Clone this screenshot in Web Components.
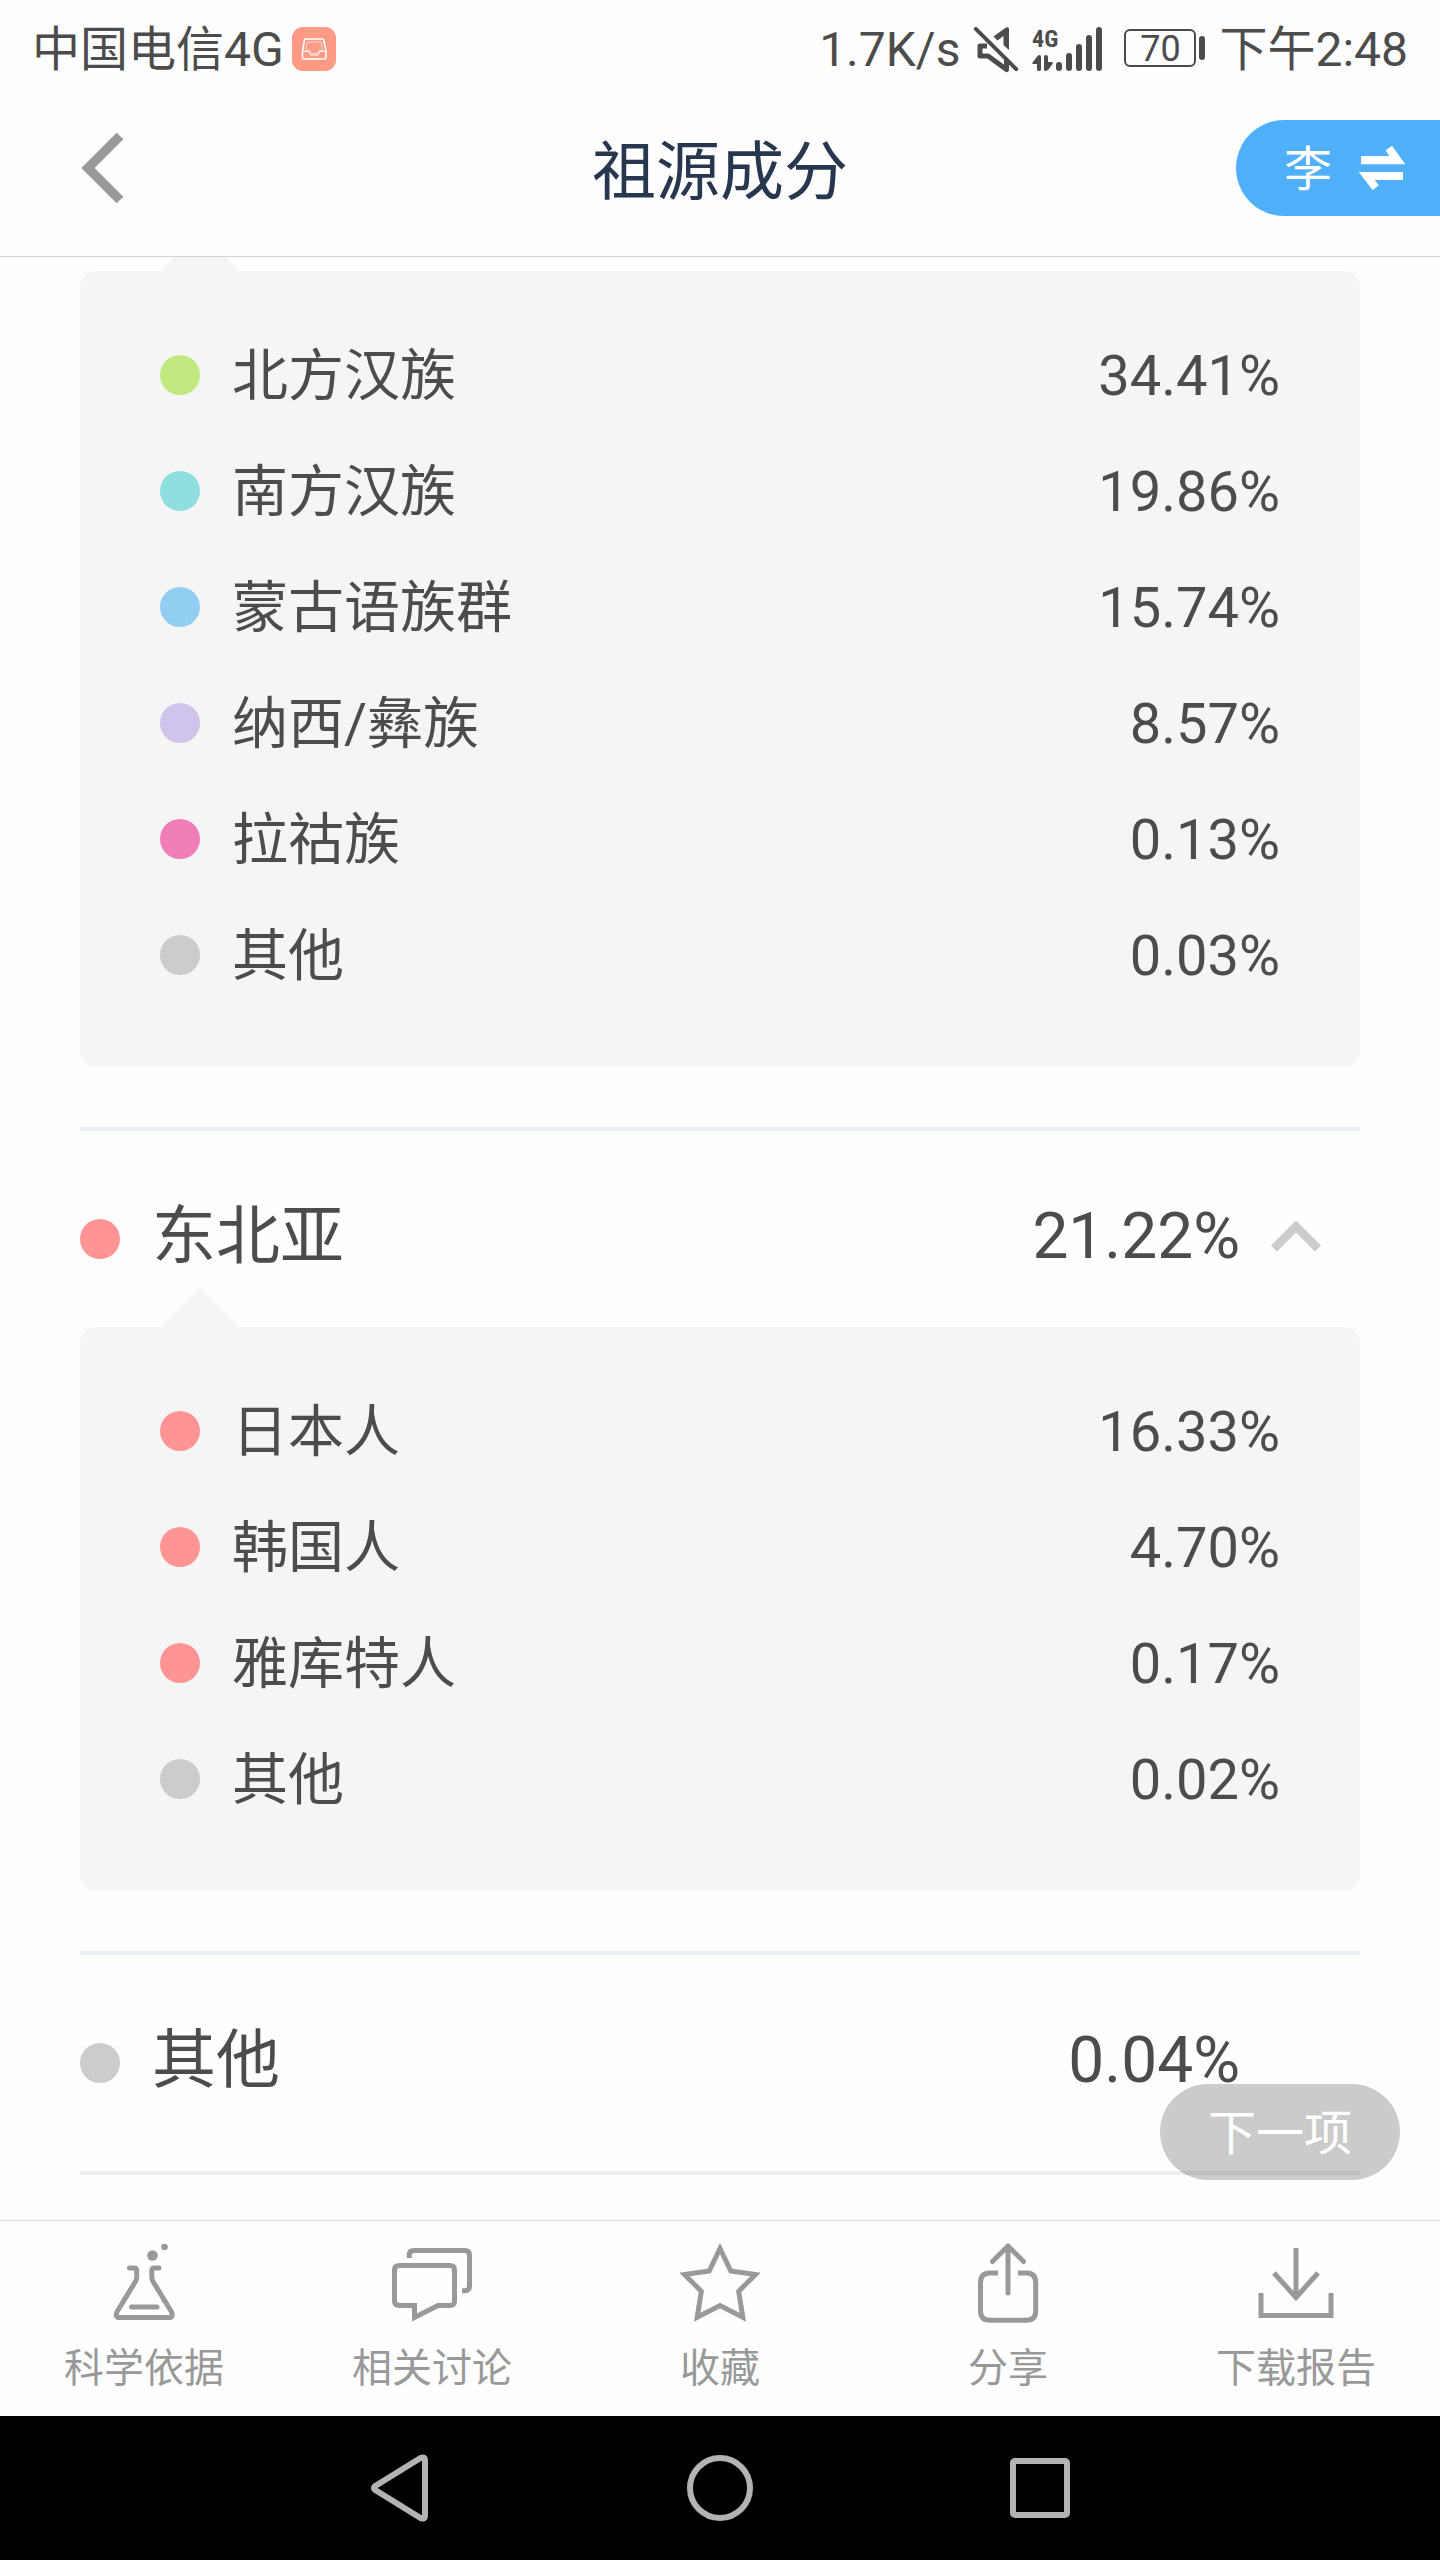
<!DOCTYPE html>
<html lang="zh-CN">
<head>
<meta charset="utf-8">
<meta name="viewport" content="width=device-width, initial-scale=1">
<title>祖源成分</title>
<style>
  :root {
    --page: #fefefe;
    --ink: #4c4c4c;
    --title: #27374f;
    --muted: #999;
    --panel: #f5f5f5;
    --rule: #ebeef1;
    --accent: #4fb0f9;
  }
  body {
    margin: 0;
    background: var(--page);
    color: var(--ink);
    font-family: Roboto, "Noto Sans CJK SC", sans-serif;
  }
</style>
</head>
<body>
<ancestry-app></ancestry-app>

<template id="ancestry-app">
  <style>
    :host { display: flex; flex-direction: column; min-height: 100vh; }
    main { flex: 1; position: relative; overflow: hidden; padding: 14px 80px 0; }
    .next {
      position: absolute; right: 40px; bottom: 40px;
      height: 96px; padding: 4px 48px 0; border: 0; border-radius: 48px;
      background: rgba(0, 0, 0, .2); color: #fff;
      font: inherit; font-size: 48px; line-height: 92px;
    }
  </style>
  <status-bar></status-bar>
  <page-header>
    祖源成分
    <span slot="person">李</span>
  </page-header>
  <main>
    <ancestry-panel role="list">
      <ancestry-item role="listitem" color="#c0e881" value="34.41%">北方汉族</ancestry-item>
      <ancestry-item role="listitem" color="#8fdfde" value="19.86%">南方汉族</ancestry-item>
      <ancestry-item role="listitem" color="#92cdf2" value="15.74%">蒙古语族群</ancestry-item>
      <ancestry-item role="listitem" color="#d1c4eb" value="8.57%">纳西/彝族</ancestry-item>
      <ancestry-item role="listitem" color="#f07eb9" value="0.13%">拉祜族</ancestry-item>
      <ancestry-item role="listitem" color="#cccccc" value="0.03%">其他</ancestry-item>
    </ancestry-panel>
    <ancestry-group color="#ff9494" name="东北亚" value="21.22%" expanded>
      <ancestry-panel role="list">
        <ancestry-item role="listitem" color="#ff9494" value="16.33%">日本人</ancestry-item>
        <ancestry-item role="listitem" color="#ff9494" value="4.70%">韩国人</ancestry-item>
        <ancestry-item role="listitem" color="#ff9494" value="0.17%">雅库特人</ancestry-item>
        <ancestry-item role="listitem" color="#cccccc" value="0.02%">其他</ancestry-item>
      </ancestry-panel>
    </ancestry-group>
    <ancestry-group color="#cccccc" name="其他" value="0.04%" last></ancestry-group>
    <button class="next" type="button">下一项</button>
  </main>
  <action-bar>
    <action-tab>
      <svg slot="icon" viewBox="0 0 80 80" width="80" height="80" fill="none" stroke="currentColor" stroke-width="5" stroke-linecap="round" stroke-linejoin="round">
        <circle cx="48.500" cy="12.500" r="5.300" fill="currentColor" stroke="none"/>
        <circle cx="60.500" cy="4" r="3.300" fill="currentColor" stroke="none"/>
        <path d="M25.500 25H30Q32.700 25 32.700 27.700V34Q32.700 36.500 31.500 38.500L13.200 68.500Q10.500 74.500 15.500 74.500H65Q69.800 74.500 67.300 68.500L49 38.500Q47.800 36.500 47.800 34V27.700Q47.800 25 50.500 25H55M27.500 64H53"/>
      </svg>科学依据</action-tab>
    <action-tab>
      <svg slot="icon" viewBox="0 0 80 80" width="80" height="80" fill="none" stroke="currentColor" stroke-width="5">
        <path d="M17.300 15V12Q17.300 7.500 22 7.500H73Q77.500 7.500 77.500 12V43Q77.500 47.700 73 47.700H70"/>
        <path d="M7.500 22.500H58Q62.500 22.500 62.500 27V58Q62.500 62.500 58 62.500H46L22.500 74.500V62.500H7.500Q2.500 62.500 2.500 58V27Q2.500 22.500 7.500 22.500Z"/>
      </svg>相关讨论</action-tab>
    <action-tab>
      <svg slot="icon" viewBox="0 0 80 80" width="80" height="80" fill="none" stroke="currentColor" stroke-width="5" stroke-miterlimit="10">
        <path d="M40 5.500L50.800 28L75.500 31.500L58.700 48.300L62.800 74.300L40 62.500L17.200 74.300L21.300 48.300L4.500 31.500L29.200 28Z"/>
      </svg>收藏</action-tab>
    <action-tab>
      <svg slot="icon" viewBox="0 0 80 80" width="80" height="80" fill="none" stroke="currentColor" stroke-width="5" stroke-linejoin="round">
        <path d="M40 3V50M24.500 18.500L40 3L55.500 18.500" stroke-linecap="round"/>
        <path d="M30 30H22Q12.500 30 12.500 39.500V68Q12.500 77.300 22 77.300H58.500Q67.700 77.300 67.700 68V39.500Q67.700 30 58.500 30H50"/>
      </svg>分享</action-tab>
    <action-tab>
      <svg slot="icon" viewBox="0 0 80 80" width="80" height="80" fill="none" stroke="currentColor" stroke-width="5">
        <path d="M40 5V54M18 30L40 54.500L62 30M5 50V72.500H75V50"/>
      </svg>下载报告</action-tab>
  </action-bar>
  <system-nav></system-nav>
</template>

<template id="status-bar">
  <style>
    :host {
      display: flex; align-items: center; justify-content: space-between;
      height: 96px; padding: 0 32px; font-size: 48px; line-height: 56px;
    }
    div { display: flex; align-items: center; }
    .text { padding-top: 4px; }
    .left { gap: 8px; }
    .right { gap: 14px; }
    svg { display: block; flex: none; padding-top: 2px; overflow: visible; }
    .level { display: flex; align-items: center; gap: 3px; }
    .level span {
      box-sizing: border-box; width: 72px; height: 38px;
      border: 2px solid currentColor; border-radius: 6px;
      font-size: 36px; line-height: 36px; text-align: center;
    }
    .level i { width: 6px; height: 24px; border-radius: 3px; background: currentColor; }
  </style>
  <div class="left">
    <span class="text">中国电信4G</span>
    <svg viewBox="0 0 44 44" width="44" height="44" fill="none" stroke="#fff" stroke-linejoin="round">
      <rect width="44" height="44" rx="11" fill="#ff9a85" stroke="none"/>
      <path stroke-width="1.500" d="M13.500 12H30.500Q31.500 12 31.700 13L34 24V30Q34 32 32 32H12.500Q10.500 32 10.500 30V24L12.500 13Q12.700 12 13.500 12Z"/>
      <path stroke-width="1.200" d="M10.500 24.500H16.500L19 28H25.500L28 24.500H34"/>
      <path stroke-width="1" stroke="#ffd9d0" d="M15.500 15H29L30.500 23.500H27L24.500 26.500H20L17.500 23.500H13.500Z"/>
    </svg>
  </div>
  <div class="right">
    <span class="text">1.7K/s</span>
    <svg viewBox="0 0 44 44" width="44" height="44" fill="none" stroke="currentColor" role="img" aria-label="静音">
      <path d="M1.800 1.800L42.200 42.200" stroke-width="4" stroke-linecap="round"/>
      <path d="M13 19H6V29H14L32.500 42.500V33" stroke-width="5" stroke-linejoin="round"/>
      <path d="M19.500 9.500L32 .5Q35 -.5 35 2V23L29.500 18V9L23.500 13.500Z" fill="currentColor" stroke="none"/>
    </svg>
    <svg viewBox="0 0 78 44" width="78" height="44" fill="currentColor">
      <text x="0" y="20" font-family="'Liberation Sans Narrow', 'Roboto Condensed', Roboto, sans-serif" font-size="24" font-weight="700">4G</text>
      <path d="M9 30V42.500Q9 44 7 44T5 42.500V37H1Q0 37 .5 35.500L6 28.500Q9 27 9 30ZM12 30Q12 28 14 28T16 30V35H20Q21.500 35 20.500 37L16 43Q12 45.500 12 42Z"/>
      <rect x="24" y="35" width="6" height="9" rx="3"/>
      <rect x="34" y="26" width="6" height="18" rx="3"/>
      <rect x="44" y="17" width="6" height="27" rx="3"/>
      <rect x="54" y="8" width="6" height="36" rx="3"/>
      <rect x="64" y="0" width="6" height="44" rx="3"/>
    </svg>
    <div class="level"><span>70</span><i></i></div>
    <span class="text">下午2:48</span>
  </div>
</template>

<template id="page-header">
  <style>
    :host {
      display: grid; grid-template-columns: 1fr auto 1fr; align-items: center;
      height: 144px; padding-bottom: 16px; border-bottom: 1px solid #d1d5da;
    }
    button { border: 0; padding: 0; background: none; font: inherit; }
    svg { display: block; }
    .back { justify-self: start; padding-left: 80px; color: var(--muted); }
    h1 { margin: 0; padding-top: 10px; color: var(--title); font-size: 64px; line-height: 96px; font-weight: 400; }
    .switch {
      justify-self: end; display: flex; align-items: center; gap: 26px;
      height: 96px; padding: 0 34px 0 48px; border-radius: 48px 0 0 48px;
      background: var(--accent); color: #fff; font-size: 48px; line-height: 96px;
    }
    ::slotted(span) { padding-top: 4px; }
  </style>
  <button class="back" type="button" aria-label="返回">
    <svg viewBox="0 0 44 72" width="44" height="72" fill="none" stroke="currentColor" stroke-width="9.500"><path d="M40 4L8 36L40 68"/></svg>
  </button>
  <h1><slot></slot></h1>
  <button class="switch" type="button">
    <slot name="person"></slot>
    <svg viewBox="0 0 48 48" width="48" height="48" fill="currentColor"><path d="M3 12H31.300L27.700 6.300L34 1.700L47.300 20.300H3ZM.7 28H45V36H16.700L20.700 41.300L14.700 46.300Z"/></svg>
  </button>
</template>

<template id="ancestry-panel">
  <style>
    :host {
      display: block; position: relative; padding: 46px 80px 54px;
      border-radius: 16px; background: var(--panel);
    }
    :host::before {
      content: ""; position: absolute; left: 80px; bottom: 100%;
      border: solid transparent; border-width: 0 40px 40px;
      border-bottom-color: var(--panel);
    }
  </style>
  <slot></slot>
</template>

<template id="ancestry-item">
  <style>
    :host { display: flex; align-items: center; gap: 32px; height: 116px; font-size: 56px; line-height: 80px; }
    i { flex: none; width: 40px; height: 40px; border-radius: 50%; }
    span { padding-top: 2px; }
    .name { flex: 1; }
  </style>
  <i></i><span class="name"><slot></slot></span><span class="value"></span>
</template>

<template id="ancestry-group">
  <style>
    :host { display: block; margin-top: 60px; border-top: 4px solid var(--rule); }
    :host([last]) { border-bottom: 4px solid var(--rule); }
    button {
      box-sizing: border-box; display: flex; align-items: center; width: 100%;
      padding: 58px 38px 58px 0; border: 0; background: none; color: inherit;
      font: inherit; font-size: 64px; line-height: 96px; text-align: left;
    }
    :host([expanded]) button { padding-bottom: 38px; }
    i { flex: none; width: 40px; height: 40px; margin-right: 32px; border-radius: 50%; }
    span { padding-bottom: 4px; }
    .name { flex: 1; }
    svg { flex: none; margin-left: 30px; padding-bottom: 6px; color: #ccc; visibility: hidden; }
    :host([expanded]) svg { visibility: visible; }
  </style>
  <button type="button">
    <i></i><span class="name"></span><span class="value"></span>
    <svg viewBox="0 0 52 32" width="52" height="32" fill="none" stroke="currentColor" stroke-width="8.500"><path d="M4 28.500L26 6.500L48 28.500"/></svg>
  </button>
  <slot></slot>
</template>

<template id="action-bar">
  <style>
    :host { display: flex; height: 195px; border-top: 1px solid #ddd; color: var(--muted); }
  </style>
  <slot></slot>
</template>

<template id="action-tab">
  <style>
    :host { display: block; flex: 1; }
    button {
      display: flex; flex-direction: column; align-items: center; gap: 16px;
      width: 100%; padding: 22px 0 0; border: 0; background: none; color: inherit;
      font: inherit; font-size: 40px; line-height: 60px;
    }
    ::slotted(svg) { display: block; overflow: visible; }
  </style>
  <button type="button"><slot name="icon"></slot><span><slot></slot></span></button>
</template>

<template id="system-nav">
  <style>
    :host { display: flex; align-items: center; justify-content: center; gap: 240px; height: 144px; background: #000; color: #b3b3b3; }
    button { border: 0; padding: 0; background: none; color: inherit; }
    svg { display: block; }
  </style>
  <button type="button" aria-label="返回"><svg viewBox="0 0 80 80" width="80" height="80" fill="none" stroke="currentColor" stroke-width="6" stroke-linejoin="round"><path d="M16 37.500Q12 40 16 42.500L60.500 70Q65 72 65 67.500V12.500Q65 8 60.500 10Z"/></svg></button>
  <button type="button" aria-label="主屏幕"><svg viewBox="0 0 80 80" width="80" height="80" fill="none" stroke="currentColor" stroke-width="6"><circle cx="40" cy="40" r="30"/></svg></button>
  <button type="button" aria-label="最近任务"><svg viewBox="0 0 80 80" width="80" height="80" fill="none" stroke="currentColor" stroke-width="6"><rect x="13" y="13" width="54" height="54" rx="2"/></svg></button>
</template>

<script>
  class TemplateElement extends HTMLElement {
    constructor() {
      super();
      const template = document.getElementById(this.localName);
      this.attachShadow({ mode: "open" }).append(template.content.cloneNode(true));
    }
    find(selector) { return this.shadowRoot.querySelector(selector); }
  }

  class AncestryItem extends TemplateElement {
    connectedCallback() {
      this.find("i").style.background = this.getAttribute("color");
      this.find(".value").textContent = this.getAttribute("value");
    }
  }

  class AncestryGroup extends TemplateElement {
    connectedCallback() {
      this.find("i").style.background = this.getAttribute("color");
      this.find(".name").textContent = this.getAttribute("name");
      this.find(".value").textContent = this.getAttribute("value");
      this.find("button").setAttribute("aria-expanded", this.hasAttribute("expanded"));
    }
  }

  customElements.define("status-bar", class extends TemplateElement {});
  customElements.define("page-header", class extends TemplateElement {});
  customElements.define("ancestry-panel", class extends TemplateElement {});
  customElements.define("ancestry-item", AncestryItem);
  customElements.define("ancestry-group", AncestryGroup);
  customElements.define("action-bar", class extends TemplateElement {});
  customElements.define("action-tab", class extends TemplateElement {});
  customElements.define("system-nav", class extends TemplateElement {});
  customElements.define("ancestry-app", class extends TemplateElement {});
</script>
</body>
</html>
